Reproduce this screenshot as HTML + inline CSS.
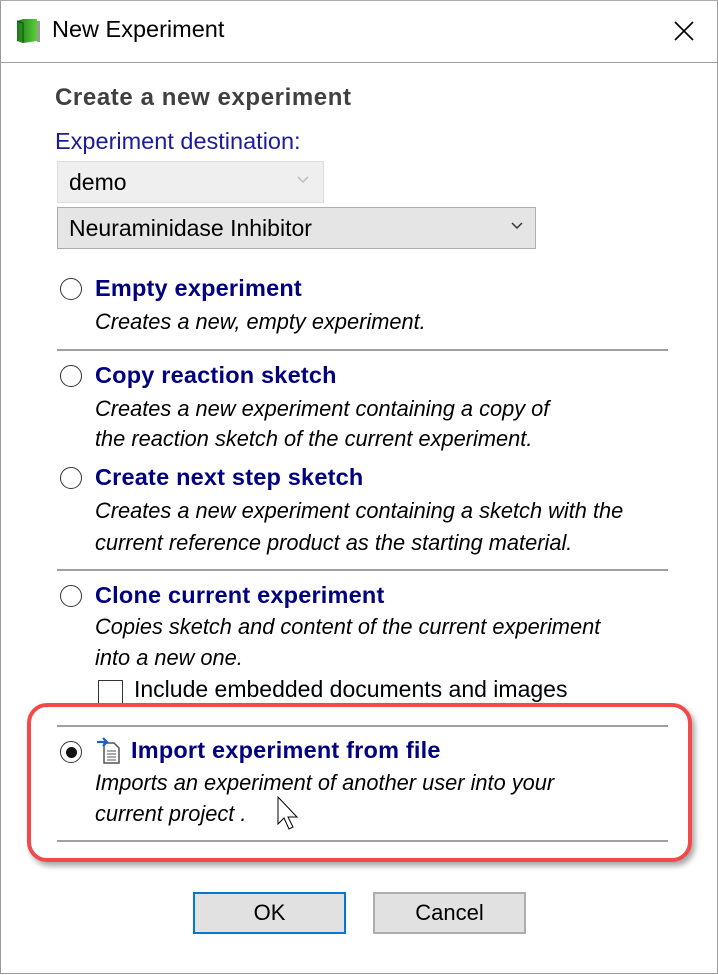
<!DOCTYPE html>
<html><head><style>
body{margin:0;width:718px;height:975px;background:#fff;font-family:"Liberation Sans",sans-serif;position:relative;overflow:hidden}
.a{position:absolute;white-space:nowrap}
.win{position:absolute;left:0;top:0;width:716px;height:972px;border:1px solid #9a9a9a;border-top:1px solid #aaa}
.lbl{color:#000080;font-weight:bold;font-size:23.5px;letter-spacing:0.2px}
.d{font-style:italic;font-size:21.8px;color:#000}
.rad{position:absolute;width:20px;height:20px;border:1.5px solid #333;border-radius:50%;background:#fff}
.hr{position:absolute;left:57px;width:611px;height:2px;background:#a0a0a0}
.btn{position:absolute;top:892px;height:38px;background:#e1e1e1;font-size:22px;text-align:center;line-height:38px}
</style></head><body>
<div class="win"></div>
<div class="a" style="left:0;top:62px;width:718px;height:1px;background:#a0a0a0"></div>
<svg class="a" style="left:15px;top:17px" width="28" height="28" viewBox="0 0 28 28"><defs><linearGradient id="g" x1="0" x2="1"><stop offset="0" stop-color="#1a7a1a"/><stop offset="1" stop-color="#5ccf3a"/></linearGradient></defs><path d="M2 4 L8 2 L22 2 L22 24 L8 26 L2 24Z" fill="url(#g)"/><path d="M2 4 L8 6 L8 26" stroke="#0d4d0d" fill="none"/><rect x="22" y="4" width="3" height="21" fill="#999"/></svg>
<div class="a" style="left:52px;top:16px;font-size:23.5px">New Experiment</div>
<svg class="a" style="left:673px;top:20px" width="22" height="22"><path d="M2 2L20 20M20 2L2 20" stroke="#000" stroke-width="1.6"/></svg>
<div class="a" style="left:55px;top:84px;font-size:24px;font-weight:bold;color:#404040;letter-spacing:0.6px">Create a new experiment</div>
<div class="a" style="left:55px;top:128px;font-size:23.5px;color:#1c1c99">Experiment destination:</div>
<div class="a" style="left:57px;top:161px;width:265px;height:40px;background:#efefef;border:1px solid #dcdcdc"></div>
<div class="a" style="left:69px;top:169px;font-size:23px">demo</div>
<svg class="a" style="left:297px;top:176px" width="12" height="8"><path d="M1 1L6 6L11 1" stroke="#bbb" fill="none" stroke-width="1.5"/></svg>
<div class="a" style="left:57px;top:207px;width:477px;height:40px;background:#e5e5e5;border:1px solid #adadad"></div>
<div class="a" style="left:69px;top:215px;font-size:23px">Neuraminidase Inhibitor</div>
<svg class="a" style="left:511px;top:222px" width="12" height="8"><path d="M1 1L6 6L11 1" stroke="#333" fill="none" stroke-width="1.5"/></svg>

<div class="rad" style="left:60px;top:278px"></div>
<div class="a lbl" style="left:95px;top:275px">Empty experiment</div>
<div class="a d" style="left:95px;top:309px">Creates a new, empty experiment.</div>
<div class="hr" style="top:349px"></div>

<div class="rad" style="left:60px;top:365px"></div>
<div class="a lbl" style="left:95px;top:362px">Copy reaction sketch</div>
<div class="a d" style="left:95px;top:396px">Creates a new experiment containing a copy of</div>
<div class="a d" style="left:95px;top:426px">the reaction sketch of the current experiment.</div>

<div class="rad" style="left:60px;top:467px"></div>
<div class="a lbl" style="left:95px;top:464px">Create next step sketch</div>
<div class="a d" style="left:95px;top:498px">Creates a new experiment containing a sketch with the</div>
<div class="a d" style="left:95px;top:530px">current reference product as the starting material.</div>
<div class="hr" style="top:569px"></div>

<div class="rad" style="left:60px;top:585px"></div>
<div class="a lbl" style="left:95px;top:582px">Clone current experiment</div>
<div class="a d" style="left:95px;top:614px">Copies sketch and content of the current experiment</div>
<div class="a d" style="left:95px;top:645px">into a new one.</div>
<div class="a" style="left:98px;top:680px;width:23px;height:23px;border:1.5px solid #333;background:#fff"></div>
<div class="a" style="left:134px;top:676px;font-size:23px;height:26px;overflow:hidden">Include embedded documents and images</div>

<div class="a" style="left:27px;top:703px;width:657px;height:151px;border:4px solid #f24a4a;border-radius:20px;box-shadow:3px 4px 6px rgba(0,0,0,0.35);background:#fff"></div>
<div class="hr" style="top:725px"></div>
<div class="rad" style="left:60px;top:741px"></div>
<div class="a" style="left:66px;top:747px;width:11px;height:11px;border-radius:50%;background:#111"></div>
<svg class="a" style="left:96px;top:737px" width="26" height="28"><path d="M8 6h10l5 5v15H8z" fill="#fff" stroke="#555" stroke-width="1.5"/><path d="M11 14h9M11 17h9M11 20h9M11 23h9" stroke="#555"/><path d="M1 5h9M7 1l4 4-4 4" stroke="#1f5fbf" stroke-width="2.2" fill="none"/></svg>
<div class="a lbl" style="left:131px;top:737px">Import experiment from file</div>
<div class="a d" style="left:95px;top:770px">Imports an experiment of another user into your</div>
<div class="a d" style="left:95px;top:801px">current project .</div>
<svg class="a" style="left:277px;top:796px" width="26" height="40"><path d="M1 1L1 28L7 22L12 33L16 31L11 21L20 21Z" fill="#fff" stroke="#000" stroke-width="1"/></svg>
<div class="hr" style="top:840px"></div>

<div class="btn" style="left:193px;width:149px;border:2px solid #0078d7">OK</div>
<div class="btn" style="left:373px;width:149px;border:2px solid #adadad">Cancel</div>
</body></html>
